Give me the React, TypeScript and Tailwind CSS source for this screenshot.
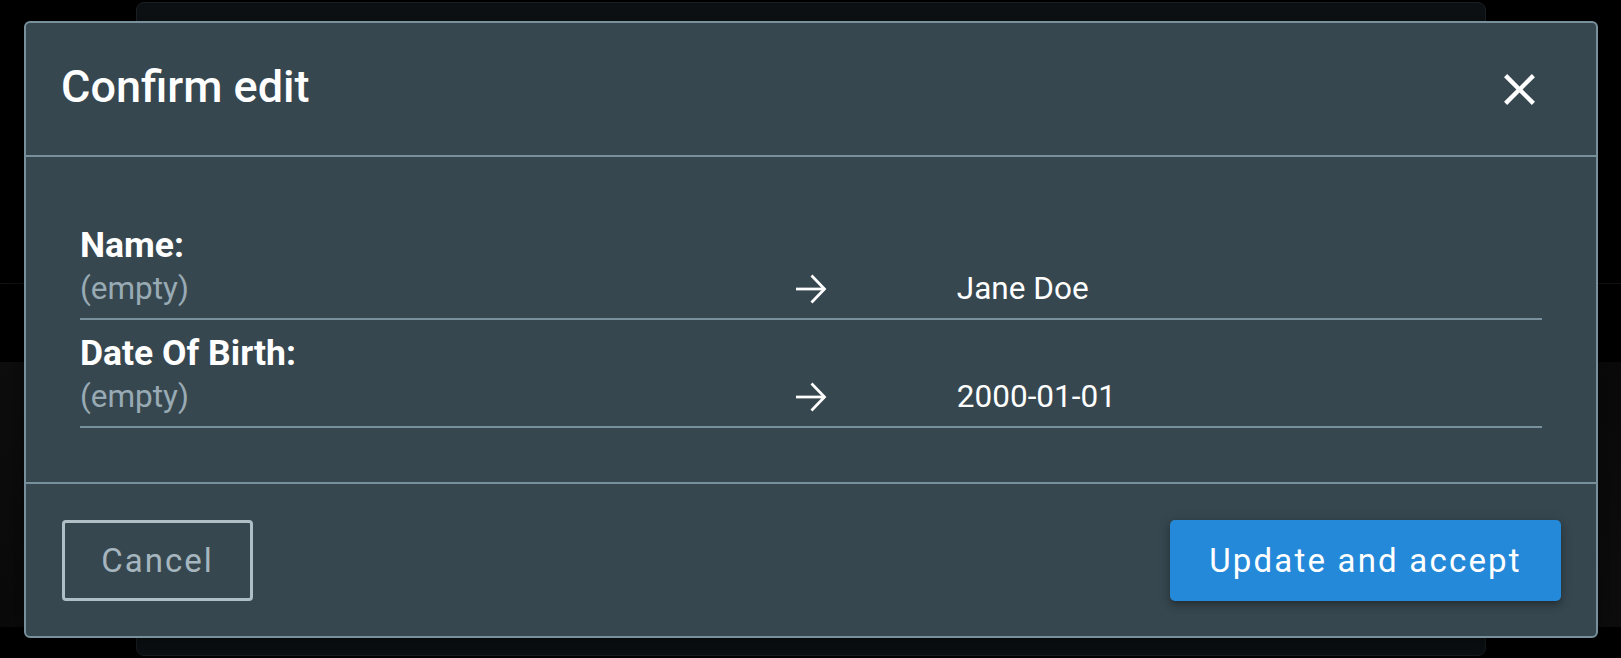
import React from "react";

const changes = [
    { label: "Name:", from: "(empty)", to: "Jane Doe" },
    { label: "Date Of Birth:", from: "(empty)", to: "2000-01-01" },
];

function ArrowRight() {
    return (
        <svg width="32" height="30" viewBox="0 0 32 30" fill="none">
            <path d="M1 15H30" stroke="white" strokeWidth="2.75" />
            <path d="M16.5 1.5L29.5 15L16.5 28.5" stroke="white" strokeWidth="2.75" />
        </svg>
    );
}

function CloseIcon() {
    return (
        <svg width="53" height="53" viewBox="0 0 24 24" fill="white">
            <path d="M19 6.41 17.59 5 12 10.59 6.41 5 5 6.41 10.59 12 5 17.59 6.41 19 12 13.41 17.59 19 19 17.59 13.41 12z" />
        </svg>
    );
}

// the dimmed page behind the modal
function SideStrip({ className }: { className: string }) {
    return (
        <div className={`flex flex-col ${className}`}>
            <div className="h-[283px]" />
            <div className="h-px bg-[#121212]" />
            <div className="h-[78px]" />
            <div className="h-[265px] bg-gradient-to-br from-[#0e0e0e] via-[#0a0a0a] to-[#0d0d0d]" />
        </div>
    );
}

export default function App() {
    return (
        <div className="relative h-[658px] w-full overflow-hidden bg-black font-[Roboto,'Liberation_Sans',sans-serif]">
            <div className="flex h-full">
                <SideStrip className="w-[136px]" />
                <div className="mt-[2px] h-[654px] w-[1350px] rounded-lg border border-[#1a2024] bg-[#0d1114]" />
                <SideStrip className="flex-1" />
            </div>

            {/* Modal */}
            <div className="absolute inset-0 pl-[24px] pt-[21px]">
                <div className="w-[1574px] rounded-[6px] border-2 border-[#78909c] bg-[#37474f] shadow-[0_10px_30px_rgba(0,0,0,0.4)]">
                    {/* Header */}
                    <div className="flex h-[134px] items-center justify-between border-b-2 border-[#78909c] pl-[35px] pr-[50px]">
                        <h1 className="pb-[5px] text-[45px] font-medium leading-[60px] text-white">
                            Confirm edit
                        </h1>
                        <CloseIcon />
                    </div>

                    {/* Body */}
                    <div className="px-[54px] pt-[55px] pb-[54px]">
                        {changes.map((c) => (
                            <div key={c.label} className="border-b-2 border-[#78909c] pt-[11px] pb-[7px]">
                                <div className="text-[35.5px] font-bold leading-[44px] text-white">{c.label}</div>
                                <div className="grid grid-cols-[5fr_2fr_5fr] items-center text-[31.5px] leading-[44px]">
                                    <span className="text-[#98aab4]">{c.from}</span>
                                    <span className="flex justify-center">
                                        <ArrowRight />
                                    </span>
                                    <span className="pl-[24px] text-white">{c.to}</span>
                                </div>
                            </div>
                        ))}
                    </div>

                    {/* Footer */}
                    <div className="flex items-center justify-between border-t-2 border-[#78909c] pt-[36px] pb-[35px] pl-[36px] pr-[35px]">
                        <button className="flex h-[81px] w-[191px] items-center justify-center rounded-[4px] border-[3px] border-[#b0bec5] text-[33px] font-normal tracking-[2px] text-[#a6b6bf]">
                            Cancel
                        </button>
                        <button className="flex h-[81px] w-[391px] items-center justify-center rounded-[5px] bg-[#2489d9] text-[33px] font-normal tracking-[2.2px] text-white shadow-[0_3px_5px_-1px_rgba(0,0,0,0.2),0_5px_8px_0_rgba(0,0,0,0.14),0_1px_14px_0_rgba(0,0,0,0.12)]">
                            Update and accept
                        </button>
                    </div>
                </div>
            </div>
        </div>
    );
}
